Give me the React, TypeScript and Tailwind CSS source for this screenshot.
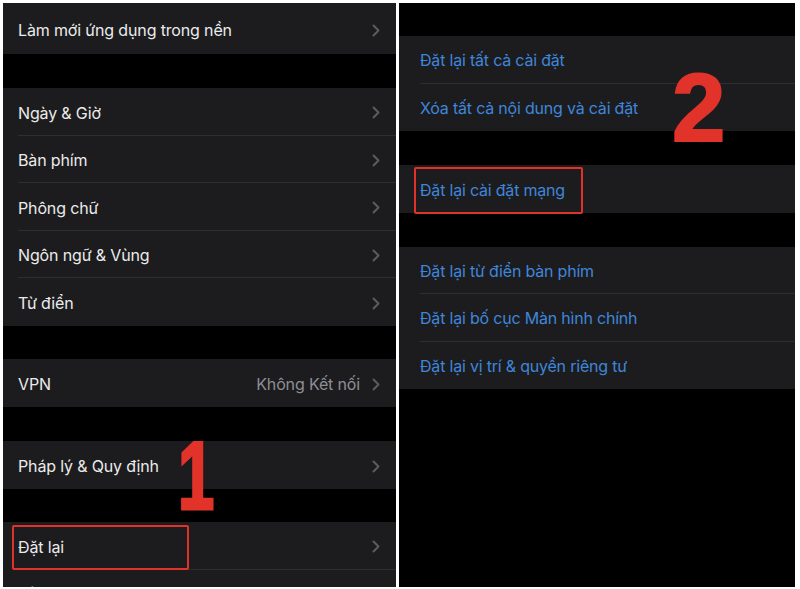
import React from "react";

const FONT = { fontFamily: "Inter, 'Noto Sans', 'Liberation Sans', sans-serif" };

function Chevron() {
  return (
    <svg width="8" height="13" viewBox="0 0 8 13" className="shrink-0">
      <path d="M1.5 1.5 L6.5 6.5 L1.5 11.5" fill="none" stroke="#5c5c60" strokeWidth="2" strokeLinecap="round" strokeLinejoin="round" />
    </svg>
  );
}

function LeftRow({ label, value, last, h = "h-[47.5px]", blue }: { label: string; value?: string; last?: boolean; h?: string; blue?: boolean }) {
  return (
    <div className={`${h} shrink-0 bg-[#1c1c1e] pl-[15px] flex flex-col`}>
      <div className={`flex-1 flex items-center pt-[3px] pr-[16px] ${last ? "" : "border-b border-[#2e2e31]"}`}>
        <span className={`flex-1 text-[16px] tracking-[-0.15px] ${blue ? "text-[#3f86da]" : "text-[#ebebeb]"}`}>{label}</span>
        {value && <span className="text-[16px] tracking-[-0.15px] text-[#8e8e93] mr-[12px]">{value}</span>}
        {!blue && <Chevron />}
      </div>
    </div>
  );
}

function RightRow({ label, last }: { label: string; last?: boolean }) {
  return (
    <div className="h-[47.5px] shrink-0 bg-[#1c1c1e] pl-[21px] flex flex-col">
      <div className={`flex-1 flex items-center pt-[2px] ${last ? "" : "border-b border-[#2e2e31]"}`}>
        <span className="text-[16px] tracking-[-0.2px] text-[#3f86da]">{label}</span>
      </div>
    </div>
  );
}

function Gap({ h }: { h: string }) {
  return <div className={`${h} shrink-0 bg-black`} />;
}

export default function App() {
  return (
    <div className="w-[800px] h-[589px] bg-white relative overflow-hidden" style={FONT}>
      <div className="flex pt-[3px] pl-[3px] gap-[3px] h-[587px]">
        {/* Left panel */}
        <div className="w-[393px] h-full bg-black flex flex-col overflow-hidden relative">
          <LeftRow label="Làm mới ứng dụng trong nền" last h="h-[51px]" />
          <Gap h="h-[34px]" />
          <LeftRow label="Ngày & Giờ" />
          <LeftRow label="Bàn phím" />
          <LeftRow label="Phông chữ" />
          <LeftRow label="Ngôn ngữ & Vùng" />
          <LeftRow label="Từ điển" last />
          <Gap h="h-[33px]" />
          <LeftRow label="VPN" value="Không Kết nối" last h="h-[48px]" />
          <Gap h="h-[34px]" />
          <LeftRow label="Pháp lý & Quy định" last h="h-[48px]" />
          <Gap h="h-[33px]" />
          <LeftRow label="Đặt lại" h="h-[48px]" />
          <LeftRow label="Tắt máy" last blue h="h-[48px]" />
          <div className="absolute left-[9px] top-[522px] w-[177px] h-[45px] border-2 border-[#e0322b] rounded-[2px]" />
        </div>
        {/* Right panel */}
        <div className="w-[396px] h-full bg-black flex flex-col overflow-hidden relative">
          <Gap h="h-[33px]" />
          <RightRow label="Đặt lại tất cả cài đặt" />
          <RightRow label="Xóa tất cả nội dung và cài đặt" last />
          <Gap h="h-[34px]" />
          <RightRow label="Đặt lại cài đặt mạng" last />
          <Gap h="h-[34px]" />
          <RightRow label="Đặt lại từ điển bàn phím" />
          <RightRow label="Đặt lại bố cục Màn hình chính" />
          <RightRow label="Đặt lại vị trí & quyền riêng tư" last />
          <div className="absolute left-[15px] top-[164px] w-[169px] h-[47px] border-2 border-[#e0322b] rounded-[2px]" />
        </div>
      </div>
      <div className="absolute left-[178px] top-[428px] text-[96px] leading-none font-black text-[#e2332b] scale-x-[0.68] origin-left [-webkit-text-stroke:3px_#e2332b]" style={{ fontFamily: "'Liberation Sans', Arial, sans-serif" }}>1</div>
      <div className="absolute left-[672px] top-[60px] text-[96px] leading-none font-bold text-[#e2332b] [-webkit-text-stroke:2px_#e2332b]" style={{ fontFamily: "'Liberation Sans', Arial, sans-serif" }}>2</div>
    </div>
  );
}
